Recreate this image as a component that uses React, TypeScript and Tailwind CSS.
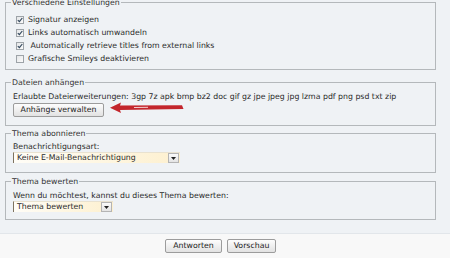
import React from 'react';

const OPTIONS = [
  { label: 'Signatur anzeigen', checked: true },
  { label: 'Links automatisch umwandeln', checked: true },
  { label: '\u00a0Automatically retrieve titles from external links', checked: true },
  { label: 'Grafische Smileys deaktivieren', checked: false },
];

function Box({ checked }: { checked: boolean }) {
  return (
    <span className="w-[8px] h-[8px] border border-[#9da3a8] bg-gradient-to-br from-[#e4e6e8] to-[#fbfbfb] flex items-center justify-center shrink-0">
      {checked && (
        <svg width="6" height="6" viewBox="0 0 6 6">
          <path d="M0.8 3.1 L2.4 4.7 L5.3 1" fill="none" stroke="#34495e" strokeWidth="1.2" />
        </svg>
      )}
    </span>
  );
}

function Btn({ children, w }: { children: React.ReactNode; w: string }) {
  return (
    <button className={`${w} h-[14px] border border-[#9c9c9c] rounded-[2px] bg-gradient-to-b from-[#fdfdfd] to-[#e2e2e2] text-[#222] text-[7.8px] leading-[12px] flex items-center justify-center`}>
      {children}
    </button>
  );
}

function Dropdown({ value, w }: { value: string; w: string }) {
  return (
    <div className={`${w} h-[11px] flex items-center border-l border-l-[#7d7260] border-t border-t-[#e9e2d0] bg-gradient-to-r from-[#fffdf7] to-[#fdf0cf]`}>
      <span className="pl-[3px] flex-1 leading-[10px]">{value}</span>
      <span className="w-[11px] h-[10px] border border-[#b4b4b4] bg-gradient-to-b from-[#fafafa] to-[#e4e4e4] flex items-center justify-center mr-[1px]">
        <svg width="5" height="3" viewBox="0 0 5 3">
          <path d="M0 0 H5 L2.5 3 Z" fill="#222" />
        </svg>
      </span>
    </div>
  );
}

function Group({ title, className, children }: { title: string; className: string; children: React.ReactNode }) {
  return (
    <fieldset className={`border border-[#b4b8bb] px-[7px] ${className}`}>
      <legend className="-ml-[2px] px-[1px] text-[#333] leading-[9px]">{title}</legend>
      {children}
    </fieldset>
  );
}

export default function App() {
  return (
    <div className="w-[450px] h-[258px] overflow-hidden bg-[#eff2f5] flex flex-col font-['DejaVu_Sans',sans-serif] text-[7.8px] text-[#2a2a2a]">
      <div className="w-[436px] pl-[5px] flex flex-col">
        <Group title="Verschiedene Einstellungen" className="-mt-[2px] pt-[6px] pb-[4px]">
          {OPTIONS.map((o) => (
            <div key={o.label} className="h-[13px] flex items-center gap-[4px] pl-[3px]">
              <Box checked={o.checked} />
              <span>{o.label}</span>
            </div>
          ))}
        </Group>

        <Group title="Dateien anhängen" className="mt-[8px] pt-[5px] pb-[8px]">
          <div className="leading-[10px]">
            Erlaubte Dateierweiterungen: 3gp 7z apk bmp bz2 doc gif gz jpe jpeg jpg lzma pdf png psd txt zip
          </div>
          <div className="flex items-start mt-[1px]">
            <Btn w="w-[91px]">Anhänge verwalten</Btn>
            {/* red annotation arrow */}
            <svg width="74" height="12" viewBox="0 0 74 12" className="ml-[6px] -mt-[1px]">
              <path d="M0 5.8 L11 0.6 L10 3.6 L72 3.2 L73.5 7 L10 8 L11 11 Z" fill="#c3262c" />
              <path d="M24 5.5 L38 5.3" stroke="#f3d0d0" strokeWidth="1" />
            </svg>
          </div>
        </Group>

        <Group title="Thema abonnieren" className="mt-[3px] pt-[4px] pb-[9px]">
          <div className="leading-[10px]">Benachrichtigungsart:</div>
          <Dropdown w="w-[167px]" value="Keine E-Mail-Benachrichtigung" />
        </Group>

        <Group title="Thema bewerten" className="mt-[4px] pt-[5px] pb-[7px]">
          <div className="leading-[10px]">Wenn du möchtest, kannst du dieses Thema bewerten:</div>
          <Dropdown w="w-[100px]" value="Thema bewerten" />
        </Group>
      </div>

      <div className="mt-auto h-[25px] bg-[#f8f8f8] border-t border-[#e2e6ea]">
        <div className="w-[441px] flex justify-center gap-[5px] pt-[5px]">
          <Btn w="w-[57px]">Antworten</Btn>
          <Btn w="w-[49px]">Vorschau</Btn>
        </div>
      </div>
    </div>
  );
}
